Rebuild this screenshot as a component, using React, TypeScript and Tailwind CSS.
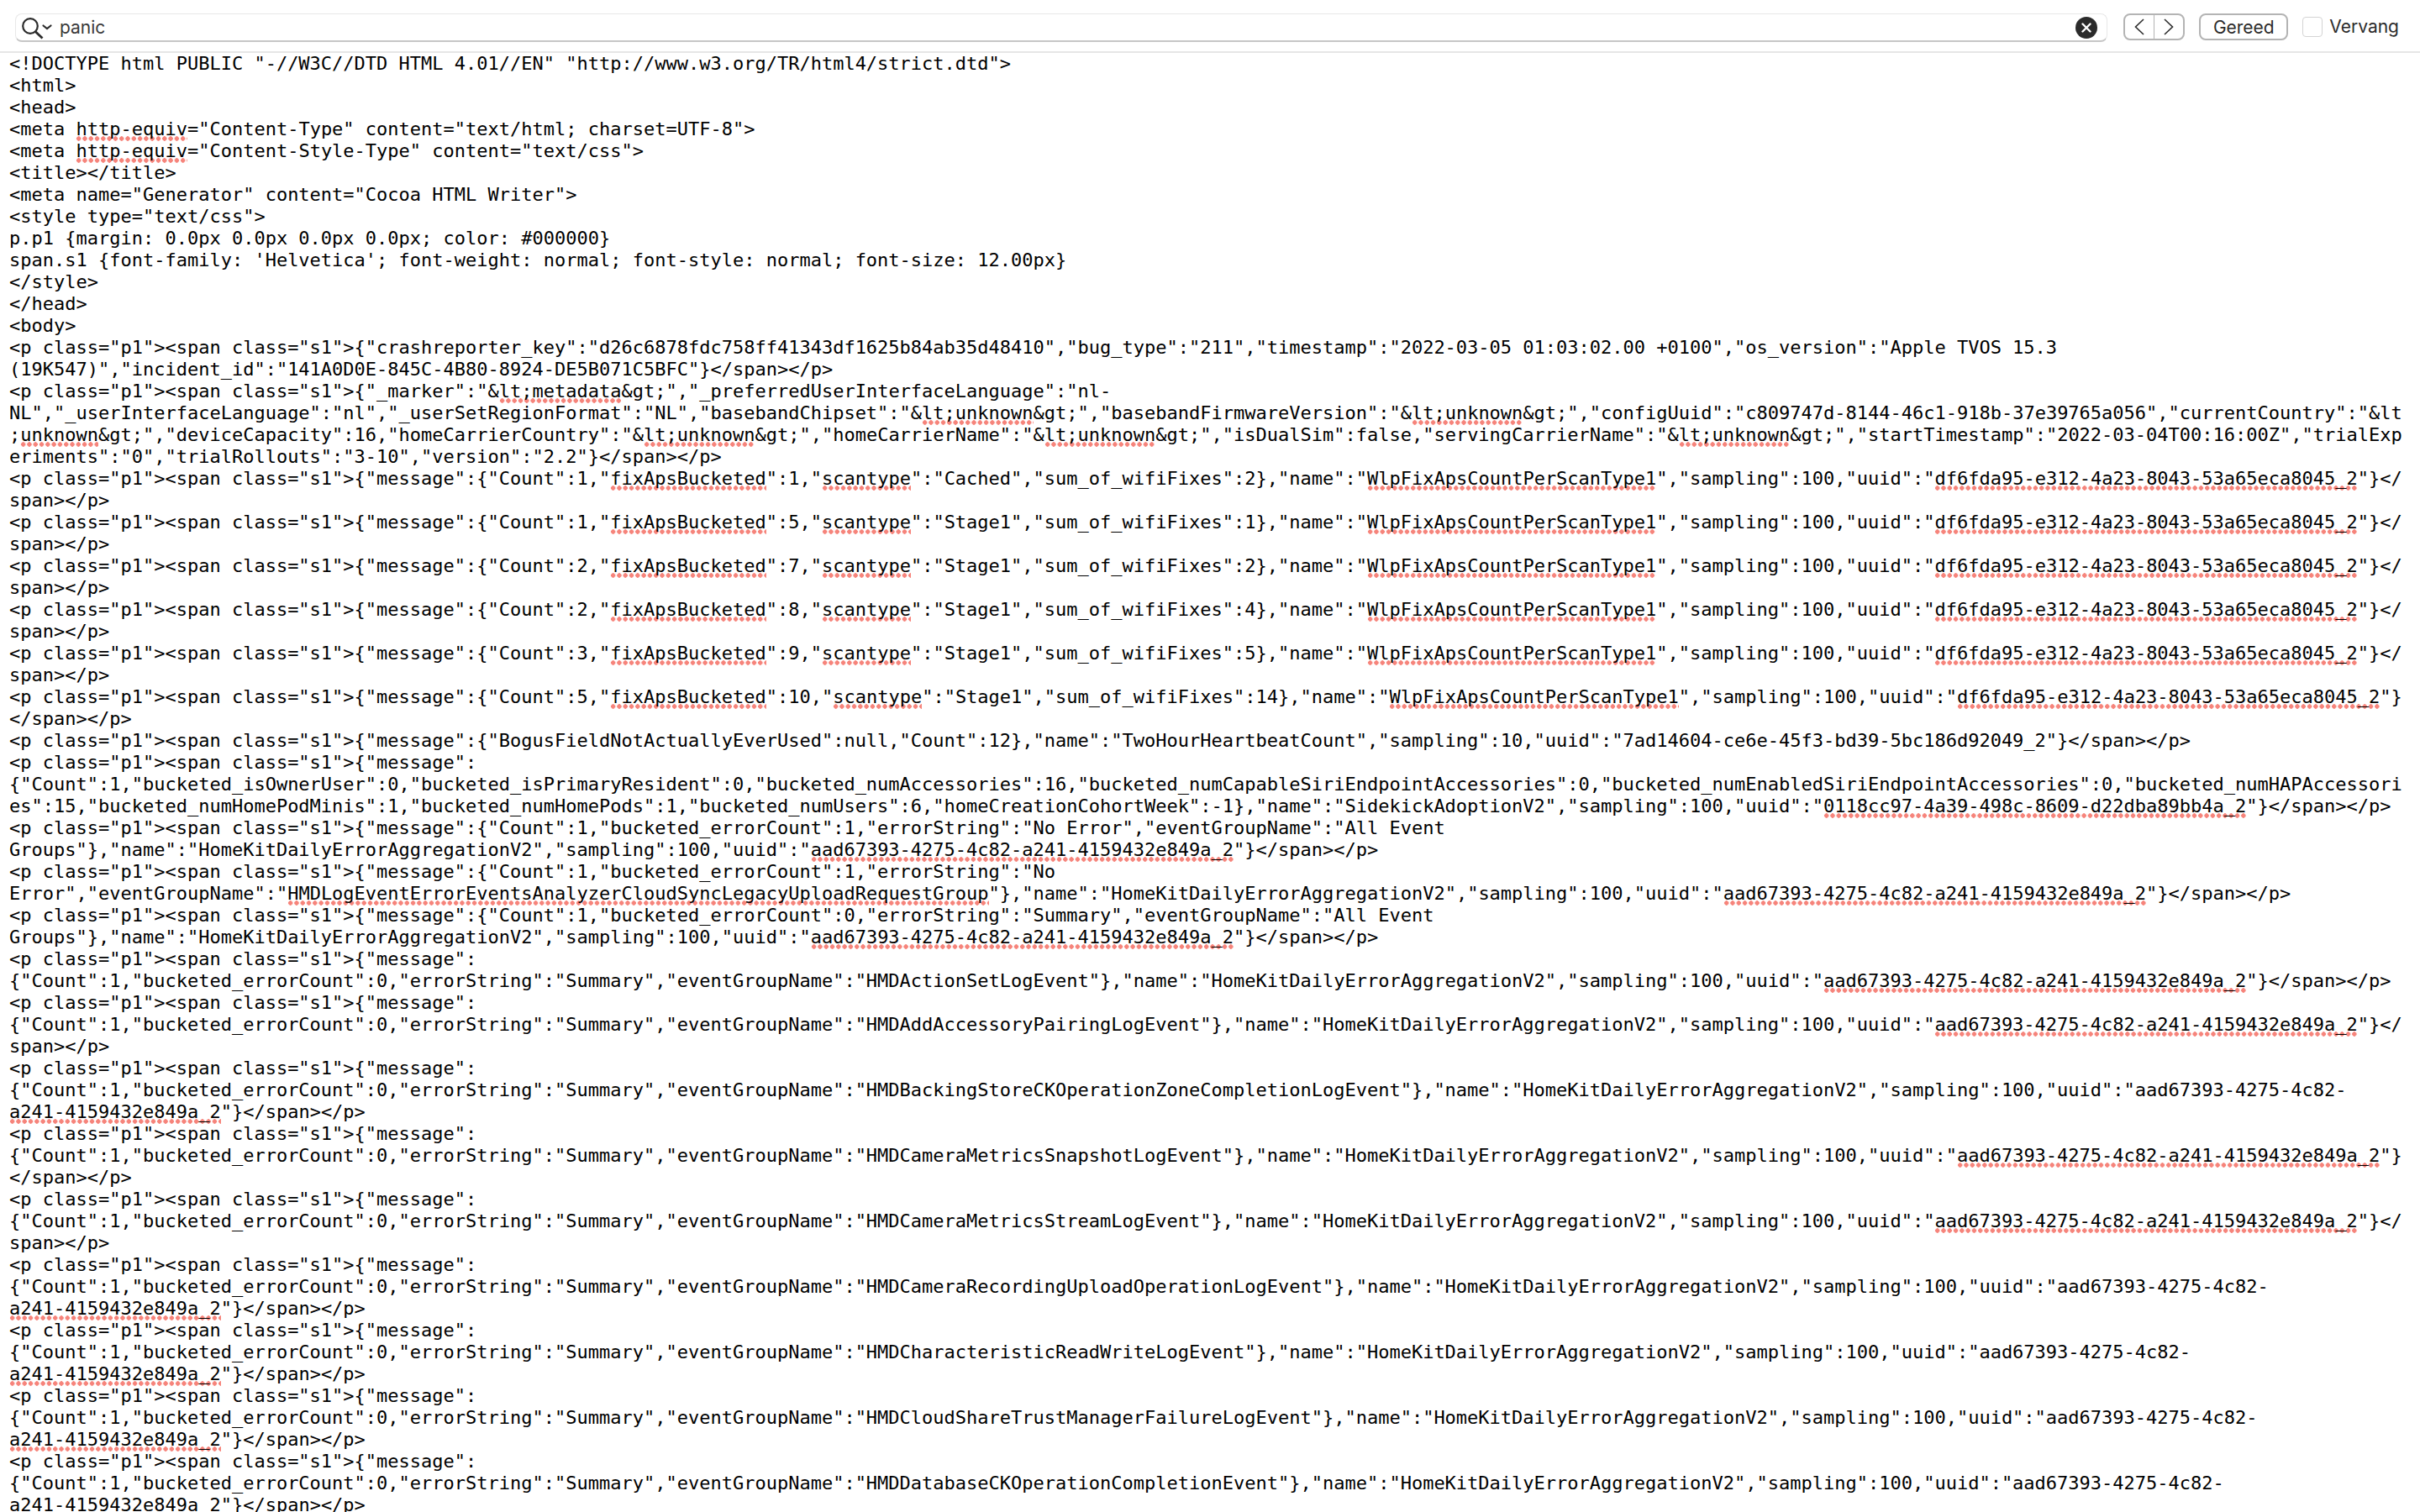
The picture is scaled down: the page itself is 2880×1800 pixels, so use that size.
import React from 'react';

const P = '<p class="p1"><span class="s1">';
const E = '</span></p>';
const MSG = P + '{"message":';
const HK = '"name":"HomeKitDailyErrorAggregationV2","sampling":100,"uuid":"';
const AAD = '|aad67393-4275-4c82-a241-4159432e849a_2|';
const SUMMARY = '{"Count":1,"bucketed_errorCount":0,"errorString":"Summary","eventGroupName":"';

const wifi = (count: number, bucket: number, scan: string, sum: number) =>
    `${MSG}{"Count":${count},"|fixApsBucketed|":${bucket},"|scantype|":"${scan}","sum_of_wifiFixes":${sum}},"name":"|WlpFixApsCountPerScanType1|","sampling":100,"uuid":"|df6fda95-e312-4a23-8043-53a65eca8045_2|"}`;

// events whose uuid wraps at the hyphen after 4c82
const wrapped = (event: string) => [
    MSG,
    `${SUMMARY}${event}"},${HK}aad67393-4275-4c82-`,
    `|a241-4159432e849a_2|"}${E}`,
];

// one entry per rendered line, text between pipes gets the spelling dots
const lines: string[] = [
    '<!DOCTYPE html PUBLIC "-//W3C//DTD HTML 4.01//EN" "http://www.w3.org/TR/html4/strict.dtd">',
    '<html>',
    '<head>',
    '<meta |http-equiv|="Content-Type" content="text/html; charset=UTF-8">',
    '<meta |http-equiv|="Content-Style-Type" content="text/css">',
    '<title></title>',
    '<meta name="Generator" content="Cocoa HTML Writer">',
    '<style type="text/css">',
    'p.p1 {margin: 0.0px 0.0px 0.0px 0.0px; color: #000000}',
    "span.s1 {font-family: 'Helvetica'; font-weight: normal; font-style: normal; font-size: 12.00px}",
    '</style>',
    '</head>',
    '<body>',
    P + '{"crashreporter_key":"d26c6878fdc758ff41343df1625b84ab35d48410","bug_type":"211","timestamp":"2022-03-05 01:03:02.00 +0100","os_version":"Apple TVOS 15.3',
    '(19K547)","incident_id":"141A0D0E-845C-4B80-8924-DE5B071C5BFC"}' + E,
    P + '{"_marker":"&|lt;metadata|&gt;","_preferredUserInterfaceLanguage":"nl-',
    'NL","_userInterfaceLanguage":"nl","_userSetRegionFormat":"NL","basebandChipset":"&|lt;unknown|&gt;","basebandFirmwareVersion":"&|lt;unknown|&gt;","configUuid":"c809747d-8144-46c1-918b-37e39765a056","currentCountry":"&lt',
    ';|unknown|&gt;","deviceCapacity":16,"homeCarrierCountry":"&|lt;unknown|&gt;","homeCarrierName":"&|lt;unknown|&gt;","isDualSim":false,"servingCarrierName":"&|lt;unknown|&gt;","startTimestamp":"2022-03-04T00:16:00Z","trialExp',
    'eriments":"0","trialRollouts":"3-10","version":"2.2"}' + E,
    wifi(1, 1, 'Cached', 2) + '</',
    'span></p>',
    wifi(1, 5, 'Stage1', 1) + '</',
    'span></p>',
    wifi(2, 7, 'Stage1', 2) + '</',
    'span></p>',
    wifi(2, 8, 'Stage1', 4) + '</',
    'span></p>',
    wifi(3, 9, 'Stage1', 5) + '</',
    'span></p>',
    wifi(5, 10, 'Stage1', 14),
    E,
    MSG + '{"BogusFieldNotActuallyEverUsed":null,"Count":12},"name":"TwoHourHeartbeatCount","sampling":10,"uuid":"7ad14604-ce6e-45f3-bd39-5bc186d92049_2"}' + E,
    MSG,
    '{"Count":1,"bucketed_isOwnerUser":0,"bucketed_isPrimaryResident":0,"bucketed_numAccessories":16,"bucketed_numCapableSiriEndpointAccessories":0,"bucketed_numEnabledSiriEndpointAccessories":0,"bucketed_numHAPAccessori',
    'es":15,"bucketed_numHomePodMinis":1,"bucketed_numHomePods":1,"bucketed_numUsers":6,"homeCreationCohortWeek":-1},"name":"SidekickAdoptionV2","sampling":100,"uuid":"|0118cc97-4a39-498c-8609-d22dba89bb4a_2|"}' + E,
    MSG + '{"Count":1,"bucketed_errorCount":1,"errorString":"No Error","eventGroupName":"All Event',
    `Groups"},${HK}${AAD}"}${E}`,
    MSG + '{"Count":1,"bucketed_errorCount":1,"errorString":"No',
    `Error","eventGroupName":"|HMDLogEventErrorEventsAnalyzerCloudSyncLegacyUploadRequestGroup|"},${HK}${AAD}"}${E}`,
    MSG + '{"Count":1,"bucketed_errorCount":0,"errorString":"Summary","eventGroupName":"All Event',
    `Groups"},${HK}${AAD}"}${E}`,
    MSG,
    `${SUMMARY}HMDActionSetLogEvent"},${HK}${AAD}"}${E}`,
    MSG,
    `${SUMMARY}HMDAddAccessoryPairingLogEvent"},${HK}${AAD}"}</`,
    'span></p>',
    ...wrapped('HMDBackingStoreCKOperationZoneCompletionLogEvent'),
    MSG,
    `${SUMMARY}HMDCameraMetricsSnapshotLogEvent"},${HK}${AAD}"}`,
    E,
    MSG,
    `${SUMMARY}HMDCameraMetricsStreamLogEvent"},${HK}${AAD}"}</`,
    'span></p>',
    ...wrapped('HMDCameraRecordingUploadOperationLogEvent'),
    ...wrapped('HMDCharacteristicReadWriteLogEvent'),
    ...wrapped('HMDCloudShareTrustManagerFailureLogEvent'),
    ...wrapped('HMDDatabaseCKOperationCompletionEvent'),
];

const SourceLine: React.FC<{ text: string }> = ({ text }) => (
    <div className="h-[26px] whitespace-pre">
        {text.split('|').map((part, i) =>
            i % 2 === 1 ? (
                <span
                    key={i}
                    className="pb-[2px] bg-[radial-gradient(circle,#f6847b_2.4px,transparent_2.8px)] bg-[length:7.3px_5.6px] bg-[position:0_100%] bg-repeat-x"
                >
                    {part}
                </span>
            ) : (
                part
            )
        )}
    </div>
);

const FindBar = () => (
    <div className="h-[63px] shrink-0 flex items-start pt-[16px] pl-[18px] pr-[25px] border-b-2 border-[#e6e6e6] font-['Inter',sans-serif] text-[21px] text-[#2b2b2b]">
        {/* Search field */}
        <div className="flex-1 h-[34px] flex items-center pl-[7px] pr-[11px] bg-white rounded-[8px] border border-[#e8e8e8] border-b-2 border-b-[#c6c6c6]">
            <svg width="37" height="30" viewBox="0 0 37 30" fill="none" stroke="#2b2b2b" strokeWidth="2.2" className="shrink-0">
                <circle cx="10" cy="13" r="8.8" />
                <path d="M16 19.5 L24.5 27.5" strokeWidth="2.8" />
                <path d="M25.5 12.5 L30 16 L34.5 12.5" strokeLinecap="round" />
            </svg>
            <span className="ml-[8px] text-[#3a3a3a]">panic</span>
            <div className="ml-auto w-[26px] h-[26px] rounded-full bg-[#2b2b2b] flex items-center justify-center">
                <svg width="12" height="12" viewBox="0 0 12 12" stroke="white" strokeWidth="2.4" strokeLinecap="round">
                    <path d="M1.5 1.5 L10.5 10.5 M10.5 1.5 L1.5 10.5" />
                </svg>
            </div>
        </div>

        {/* Previous / next */}
        <div className="ml-[19px] w-[73px] h-[32px] flex rounded-[8px] border-2 border-[#b4b4b4] bg-white">
            <button className="flex-1 flex items-center justify-center border-r border-[#b4b4b4]">
                <svg width="12" height="20" viewBox="0 0 12 20" fill="none" stroke="#2b2b2b" strokeWidth="1.6">
                    <path d="M11 1 L1.5 10 L11 19" />
                </svg>
            </button>
            <button className="flex-1 flex items-center justify-center">
                <svg width="12" height="20" viewBox="0 0 12 20" fill="none" stroke="#2b2b2b" strokeWidth="1.6">
                    <path d="M1 1 L10.5 10 L1 19" />
                </svg>
            </button>
        </div>

        <button className="ml-[17px] w-[106px] h-[32px] rounded-[8px] border-2 border-[#b4b4b4] bg-white flex items-center justify-center leading-none">
            Gereed
        </button>

        <label className="ml-[17px] h-[32px] flex items-center">
            <span className="w-[24px] h-[24px] rounded-[4px] border border-[#d4d4d4] bg-white" />
            <span className="ml-[8px]">Vervang</span>
        </label>
    </div>
);

export default function App() {
    return (
        <div className="h-screen overflow-hidden flex flex-col bg-white">
            <FindBar />
            <div className="pl-[11px] font-['DejaVu_Sans_Mono',monospace] text-[22px] leading-[26px] text-black">
                {lines.map((line, i) => (
                    <SourceLine key={i} text={line} />
                ))}
            </div>
        </div>
    );
}
